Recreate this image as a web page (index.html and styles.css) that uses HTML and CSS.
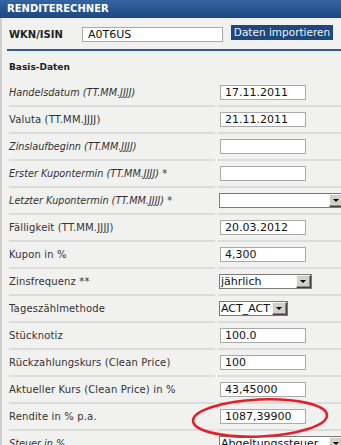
FILE: index.html
```html
<!DOCTYPE html>
<html lang="de">
<head>
<meta charset="utf-8">
<title>Renditerechner</title>
<link rel="stylesheet" href="styles.css">
</head>
<body>
<div class="panel">
  <div class="head">RENDITERECHNER</div>
  <div class="main">
    <div class="wkn">
      <span class="wkn-label">WKN/ISIN</span>
      <input class="field wkn-input" type="text" value="A0T6US">
      <span class="btn">Daten importieren</span>
    </div>
    <div class="rule"></div>
    <div class="section">Basis-Daten</div>
    <div class="rows">
      <div class="row"><div class="lbl it">Handelsdatum (TT.MM.JJJJ)</div><div class="val"><input class="field" type="text" value="17.11.2011"></div></div>
      <div class="row"><div class="lbl">Valuta (TT.MM.JJJJ)</div><div class="val"><input class="field" type="text" value="21.11.2011"></div></div>
      <div class="row"><div class="lbl it">Zinslaufbeginn (TT.MM.JJJJ)</div><div class="val"><input class="field" type="text" value=""></div></div>
      <div class="row"><div class="lbl it">Erster Kupontermin (TT.MM.JJJJ) *</div><div class="val"><input class="field" type="text" value=""></div></div>
      <div class="row"><div class="lbl it">Letzter Kupontermin (TT.MM.JJJJ) *</div><div class="val"><span class="sel sel-wide"><span class="sel-text"></span><span class="sel-btn"></span></span></div></div>
      <div class="row"><div class="lbl">Fälligkeit (TT.MM.JJJJ)</div><div class="val"><input class="field" type="text" value="20.03.2012"></div></div>
      <div class="row"><div class="lbl">Kupon in %</div><div class="val"><input class="field" type="text" value="4,300"></div></div>
      <div class="row"><div class="lbl">Zinsfrequenz **</div><div class="val"><span class="sel sel-zins"><span class="sel-text">jährlich</span><span class="sel-btn"></span></span></div></div>
      <div class="row"><div class="lbl">Tageszählmethode</div><div class="val"><span class="sel sel-act"><span class="sel-text">ACT_ACT</span><span class="sel-btn"></span></span></div></div>
      <div class="row"><div class="lbl">Stücknotiz</div><div class="val"><input class="field" type="text" value="100.0"></div></div>
      <div class="row"><div class="lbl">Rückzahlungskurs (Clean Price)</div><div class="val"><input class="field" type="text" value="100"></div></div>
      <div class="row"><div class="lbl">Aktueller Kurs (Clean Price) in %</div><div class="val"><input class="field" type="text" value="43,45000"></div></div>
      <div class="row"><div class="lbl">Rendite in % p.a.</div><div class="val"><input class="field" type="text" value="1087,39900"></div></div>
      <div class="row"><div class="lbl it">Steuer in %</div><div class="val"><span class="sel sel-wide"><span class="sel-text">Abgeltungssteuer</span><span class="sel-btn"></span></span></div></div>
    </div>
  </div>
  <svg class="mark" width="146" height="46" viewBox="0 0 146 46">
    <ellipse cx="70" cy="22" rx="67" ry="18.5" transform="rotate(-2.5 70 22)" fill="none" stroke="#e3202a" stroke-width="2.6"/>
  </svg>
</div>
</body>
</html>
```

FILE: styles.css
```css
html, body {
  margin: 0;
  padding: 0;
  overflow: hidden;
  background: #f1f1ef;
}

.panel {
  position: relative;
  width: 341px;
  height: 445px;
  overflow: hidden;
  font-family: "DejaVu Sans", Verdana, sans-serif;
  color: #333;
}

.head {
  height: 18px;
  box-sizing: border-box;
  padding-left: 7px;
  background: linear-gradient(#3465a2, #1d4780);
  color: #fff;
  font-weight: bold;
  font-size: 10px;
  line-height: 18px;
}

.main {
  border-left: 2px solid #cfcfcd;
  padding-left: 5px;
  height: 427px;
  box-sizing: border-box;
}

.wkn {
  display: flex;
  align-items: center;
  height: 31px;
  padding-left: 2px;
}

.wkn-label {
  width: 73px;
  font-weight: bold;
  font-size: 10px;
  color: #222;
  padding-top: 2px;
}

.field {
  box-sizing: border-box;
  width: 86px;
  height: 15px;
  margin: 0 0 0 1px;
  border: 1px solid #a9a9a9;
  background: #fff;
  padding: 0 0 0 4px;
  font-family: "DejaVu Sans", Verdana, sans-serif;
  font-size: 11px;
  color: #111;
  outline: none;
}

.wkn-input {
  width: 141px;
  margin: 1px 0 0 0;
  padding-left: 5px;
}

.btn {
  margin-left: 8px;
  width: 102px;
  height: 15px;
  box-sizing: border-box;
  background: #1f477c;
  color: #eef2f8;
  font-size: 10.5px;
  line-height: 15px;
  text-align: center;
  white-space: nowrap;
  margin-top: -2px;
}

.rule {
  height: 2px;
  background: #2d5b97;
}

.section {
  height: 29px;
  box-sizing: border-box;
  padding: 10px 0 0 2px;
  font-weight: bold;
  font-size: 9px;
  line-height: 12px;
  color: #222;
}

.rows {
  margin-left: 2px;
}

.row {
  display: flex;
  gap: 3px;
}

.lbl, .val {
  height: 27px;
  box-sizing: border-box;
  border-bottom: 2px solid #dcdcda;
  display: flex;
  align-items: center;
}

.lbl {
  width: 206px;
  flex: none;
  font-size: 10px;
  letter-spacing: 0.15px;
  color: #333;
  padding-bottom: 1px;
}

.lbl.it {
  font-style: italic;
  font-size: 9.7px;
  letter-spacing: 0;
}

.val {
  flex: 1;
  padding-left: 1px;
  overflow: hidden;
}

.sel {
  display: inline-flex;
  flex: none;
  box-sizing: border-box;
  height: 15px;
  border: 1px solid #7b7b7b;
  background: #fff;
  font-size: 11px;
  color: #111;
}

.sel-text {
  flex: 1;
  padding-left: 1px;
  line-height: 13px;
  white-space: nowrap;
  overflow: hidden;
}

.sel-btn {
  position: relative;
  flex: none;
  width: 15px;
  height: 13px;
  box-sizing: border-box;
  background: #d4d0c8;
  border: 1px solid;
  border-color: #f4f4f4 #404040 #404040 #f4f4f4;
  box-shadow: inset -1px -1px #8a8a8a;
}

.sel-btn::after {
  content: "";
  position: absolute;
  left: 3px;
  top: 4px;
  border-top: 3px solid #000;
  border-left: 3px solid transparent;
  border-right: 3px solid transparent;
}

.sel-wide { width: 126px; }
.sel-zins { width: 93px; }
.sel-act { width: 69px; }

.mark {
  position: absolute;
  left: 190px;
  top: 396px;
}
```
